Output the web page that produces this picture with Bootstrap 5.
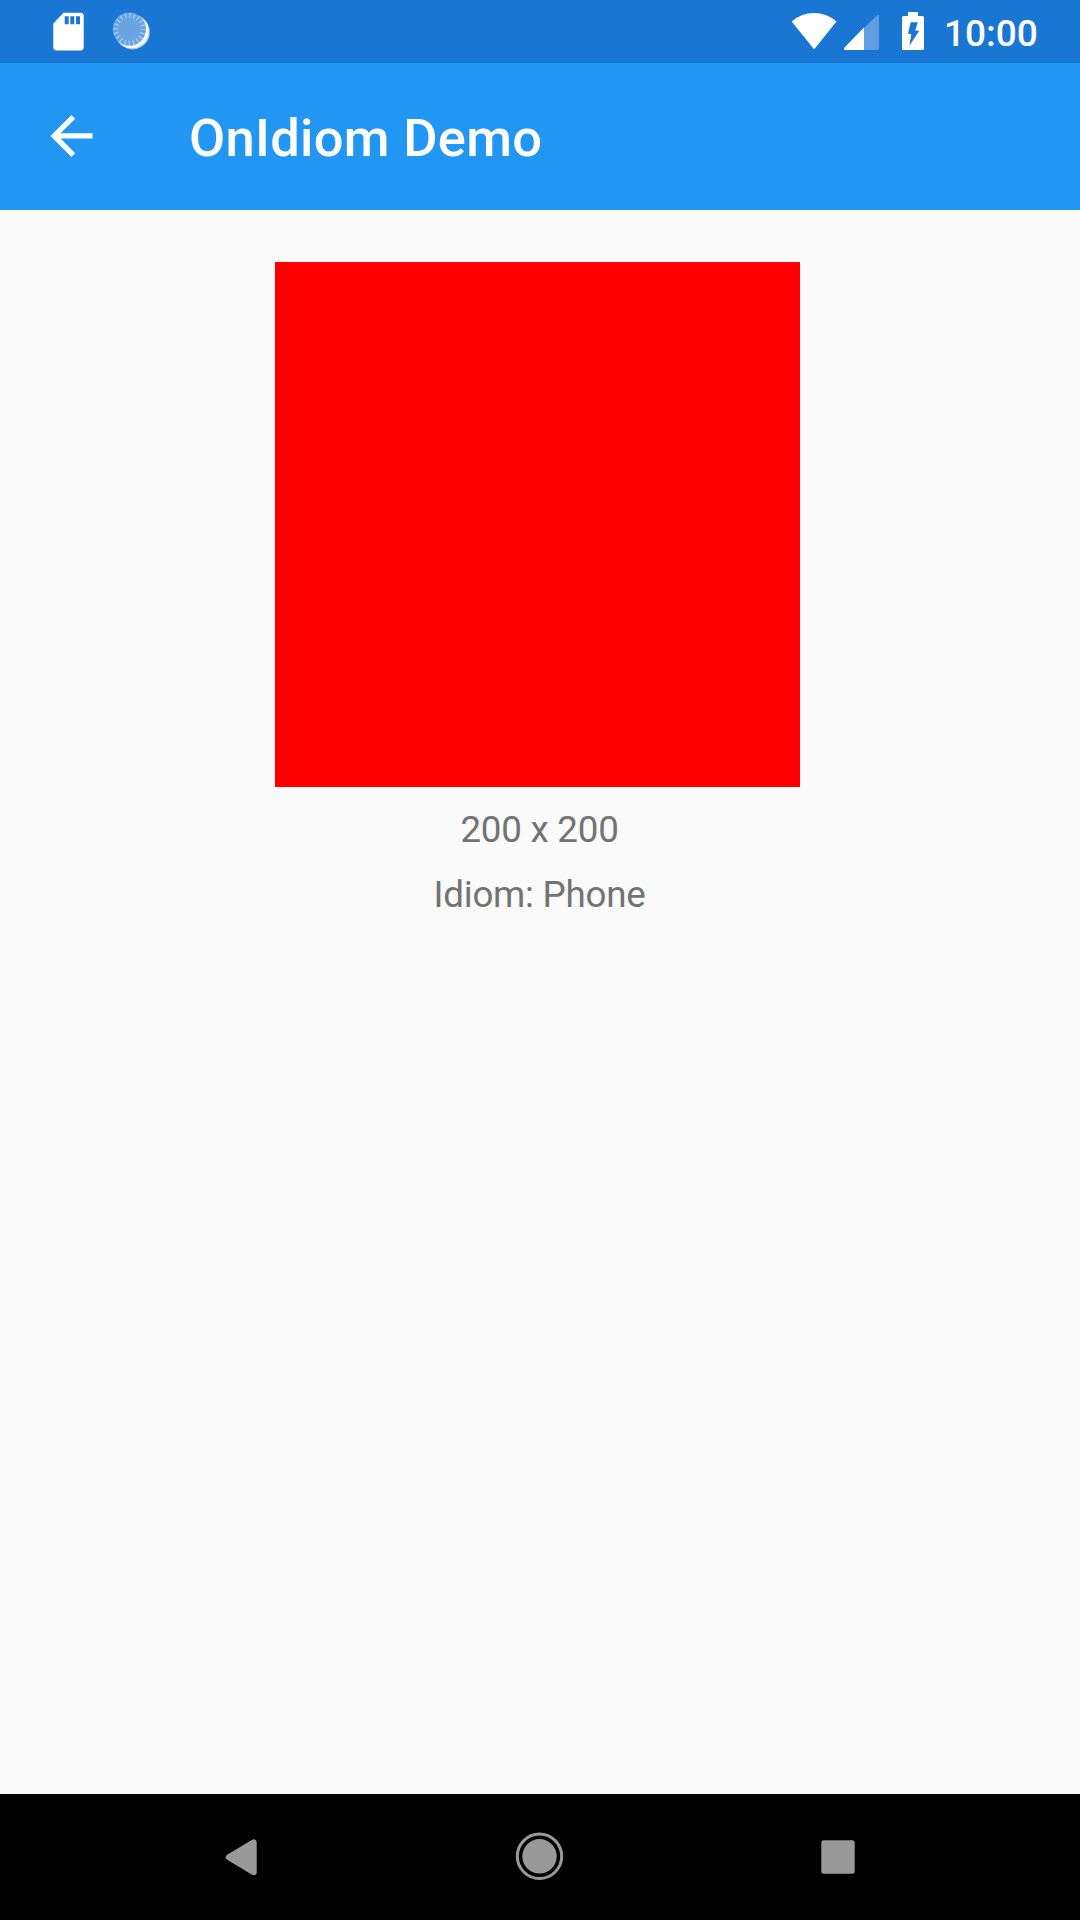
<!DOCTYPE html>
<html lang="en">
<head>
<meta charset="utf-8">
<meta name="viewport" content="width=device-width, initial-scale=1">
<title>OnIdiom Demo</title>
<link href="https://cdn.jsdelivr.net/npm/bootstrap@5.3.0/dist/css/bootstrap.min.css" rel="stylesheet">
<style>
  body { font-family: Roboto, "Noto Sans", sans-serif; background: #fafafa; color: #737373; overflow: hidden; }
  .screen { height: 1920px; }
  .status-bar { height: 63px; background: #1976d2; padding: 0 42px 0 50px; }
  .status-bar svg { height: 63px; }
  .clock { font-size: 37px; font-weight: 500; line-height: 63px; padding: 3px 0 0; width: 93px; margin-left: -1px; margin-right: 1px; }
  .app-bar { height: 147px; background: #2196f3; padding-left: 39.5px; }
  .app-title { font-size: 52.5px; font-weight: 500; line-height: 62px; padding-top: 3px; margin-left: 86.5px; letter-spacing: .3px; }
  .swatch { width: 525px; height: 525px; margin: 52px 5px 10px 0; background: #f00; }
  .caption { font-size: 36.75px; line-height: 65px; letter-spacing: -.25px; padding-right: 1px; }
  .nav-keys { height: 126px; background: #000; padding: 0 221px; }
</style>
<script src="https://cdn.jsdelivr.net/npm/bootstrap@5.3.0/dist/js/bootstrap.bundle.min.js"></script>
</head>
<body>
<div class="screen d-flex flex-column">
  <div class="status-bar d-flex align-items-center justify-content-between text-white flex-shrink-0">
    <div class="d-flex">
      <!-- SD card -->
      <svg width="60" viewBox="0 0 60 63" fill="#fff"><path fill-rule="evenodd" d="M13.5 12.7H30.5Q33.7 12.7 33.7 16V47Q33.7 50.4 30.5 50.4H6.5Q3.3 50.4 3.3 47V23.5ZM14.7 16.2V24.2H18.7V16.2ZM20.3 16.2V24.2H24.3V16.2ZM26 16.2V24.2H30V16.2Z"/></svg>
      <!-- Sync spinner -->
      <svg width="44" viewBox="0 0 44 63"><circle cx="22.6" cy="32.2" r="17.2" fill="#a9cdf2"/><circle cx="21.7" cy="31.3" r="17" fill="#fff"/><circle cx="19.4" cy="29.2" r="16.6" fill="#67a4e1"/><circle cx="19.4" cy="29.2" r="13.7" fill="none" stroke="#a3c8ee" stroke-width="5" stroke-dasharray="1.4 2.904" stroke-dashoffset=".7"/></svg>
    </div>
    <div class="d-flex align-items-center">
      <!-- Wi-Fi, cellular, charging battery -->
      <svg width="50" viewBox="0 0 50 63" fill="#fff"><path d="M1.7 21.6Q11 13 24 13T46.5 21.6L25 48.2Q24.1 49.6 23.2 48.2Z"/></svg>
      <svg width="55" viewBox="0 0 55 63"><path fill="#5f9fdf" d="M24 28L36.8 15.4Q39 14.2 39 16.5V48.5Q39 50 37.5 50H24Z"/><path fill="#fff" d="M24 27.5V50H5Q3.2 49.5 4.5 47.5Z"/></svg>
      <svg width="50" viewBox="0 0 50 63"><path fill="#fff" fill-rule="evenodd" d="M13 12H23V16H27.5Q29 16 29 17.5V48.5Q29 50 27.5 50H8.5Q7 50 7 48.5V17.5Q7 16 8.5 16H13ZM15.7 22.2L13 33.6L16.3 34.2L14.3 45.8L24.4 30.8L20.3 30.4L22.8 22.2Z"/></svg>
      <span class="clock">10:00</span>
    </div>
  </div>
  <header class="app-bar d-flex align-items-center text-white flex-shrink-0">
    <svg width="63" height="63" viewBox="0 .2 24 24" fill="#fff"><path d="M20 11H7.83l5.59-5.59L12 4l-8 8 8 8 1.41-1.41L7.83 13H20v-2z"/></svg>
    <h1 class="app-title mb-0">OnIdiom Demo</h1>
  </header>
  <main class="flex-grow-1 d-flex flex-column align-items-center">
    <div class="swatch"></div>
    <div class="caption">200 x 200</div>
    <div class="caption">Idiom: Phone</div>
  </main>
  <nav class="nav-keys d-flex justify-content-between align-items-center flex-shrink-0">
    <svg width="40" height="126" viewBox="0 0 40 126"><path d="M7.7 63.3L32.7 48.3V78.3Z" fill="#999" stroke="#999" stroke-width="6" stroke-linejoin="round"/></svg>
    <svg width="50" height="126" viewBox="0 0 50 126"><circle cx="24.5" cy="62.3" r="22.2" fill="none" stroke="#999" stroke-width="3"/><circle cx="24.5" cy="62.3" r="17.2" fill="#999"/></svg>
    <svg width="40" height="126" viewBox="0 0 40 126"><rect x="2.3" y="46.3" width="33.4" height="33.4" rx="2.5" fill="#999"/></svg>
  </nav>
</div>
</body>
</html>
